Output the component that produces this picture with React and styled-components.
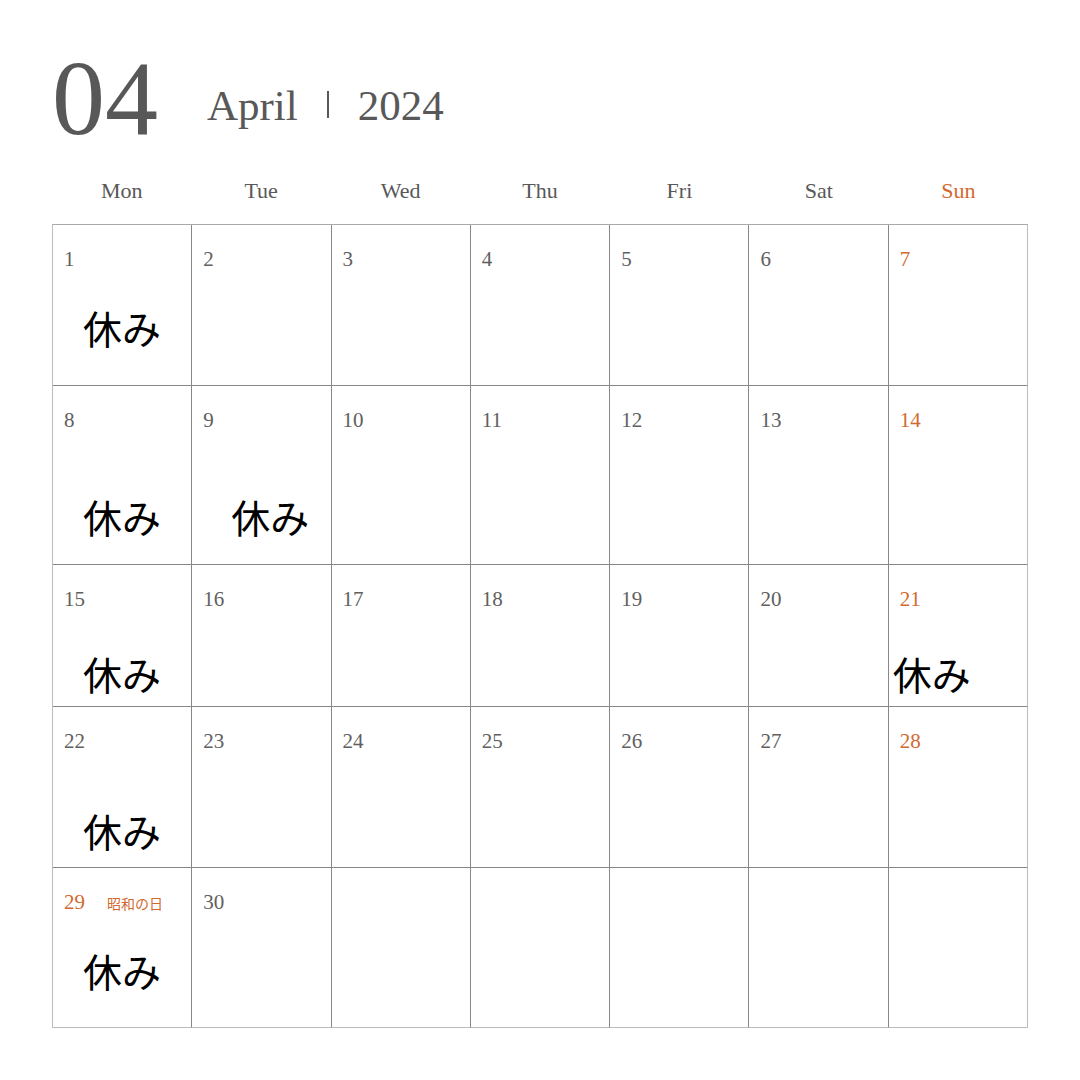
import styled, { createGlobalStyle } from 'styled-components';

const GlobalStyle = createGlobalStyle`
	html, body {
		margin: 0;
		padding: 0;
		background: #fff;
	}
`;

const SERIF = '"Liberation Serif", "DejaVu Serif", serif';
const SANS_JP = '"Noto Sans CJK JP", "Noto Sans", sans-serif';
const INK = '#585858';
const ACCENT = '#d2692f';

const Page = styled.div`
	width: 1080px;
	height: 1080px;
	box-sizing: border-box;
	padding: 42px 52px 0;
	font-family: ${SERIF};
	color: ${INK};
`;

const Title = styled.header`
	display: flex;
	align-items: flex-start;
	height: 108px;
`;

const MonthNum = styled.span`
	font-size: 106px;
	line-height: 1;
	margin-top: 4px;
`;

const Sub = styled.div`
	display: flex;
	align-items: center;
	margin: 43px 0 0 49px;
	height: 42px;
	font-size: 43px;
	line-height: 42px;
`;

const Divider = styled.span`
	display: inline-block;
	width: 2px;
	height: 27px;
	margin: -3px 29px 0 29px;
	background: ${INK};
`;

const WeekRow = styled.div`
	display: grid;
	grid-template-columns: repeat(7, 1fr);
	height: 74px;
	box-sizing: border-box;
	padding-top: 7px;
	align-items: center;
`;

const WeekDay = styled.div`
	text-align: center;
	font-size: 22px;
	color: ${(p) => (p.$sun ? ACCENT : INK)};
`;

const Grid = styled.div`
	display: grid;
	grid-template-columns: repeat(7, 1fr);
	grid-template-rows: 161px 179px 142px 161px 160px;
	border-top: 1px solid #aaa;
	border-left: 1px solid #bbb;
`;

const Cell = styled.div`
	display: flex;
	flex-direction: column;
	align-items: flex-start;
	padding: 23px 0 0 11px;
	border-right: 1px solid ${(p) => (p.$last ? '#bbb' : '#888')};
	border-bottom: 1px solid ${(p) => (p.$lastRow ? '#bbb' : '#888')};
	min-width: 0;
`;

const DayLine = styled.div`
	display: flex;
	align-items: baseline;
	height: 22px;
`;

const DayNum = styled.span`
	font-size: 21px;
	line-height: 22px;
	color: ${(p) => (p.$red ? ACCENT : '#606060')};
`;

const HolidayName = styled.span`
	margin-left: 22px;
	font-family: ${SANS_JP};
	font-size: 14px;
	line-height: 22px;
	color: ${ACCENT};
`;

const Note = styled.div`
	margin-top: ${(p) => p.$top}px;
	margin-left: ${(p) => p.$indent}px;
	font-family: ${SANS_JP};
	font-size: 39px;
	line-height: 40px;
	color: #000;
	white-space: nowrap;
`;

const WEEK = ['Mon', 'Tue', 'Wed', 'Thu', 'Fri', 'Sat', 'Sun'];

// note offset from the day number, per row
const ROW_NOTE_TOP = [37, 65, 43, 58, 37];

const OFF = { 1: 19, 8: 19, 9: 28, 15: 19, 21: -7, 22: 19, 29: 19 };
const HOLIDAYS = { 29: '昭和の日' };

const weeks = [];
for (let w = 0; w < 5; w++) {
	const row = [];
	for (let d = 0; d < 7; d++) {
		const n = w * 7 + d + 1;
		row.push(n <= 30 ? n : null);
	}
	weeks.push(row);
}

const Calendar = () => (
	<Page>
		<GlobalStyle />
		<Title>
			<MonthNum>04</MonthNum>
			<Sub>
				<span>April</span>
				<Divider />
				<span>2024</span>
			</Sub>
		</Title>
		<WeekRow>
			{WEEK.map((d) => (
				<WeekDay key={d} $sun={d === 'Sun'}>
					{d}
				</WeekDay>
			))}
		</WeekRow>
		<Grid>
			{weeks.map((row, wi) =>
				row.map((n, di) => (
					<Cell key={`${wi}-${di}`} $last={di === 6} $lastRow={wi === 4}>
						{n && (
							<DayLine>
								<DayNum $red={di === 6 || HOLIDAYS[n]}>{n}</DayNum>
								{HOLIDAYS[n] && <HolidayName>{HOLIDAYS[n]}</HolidayName>}
							</DayLine>
						)}
						{n && OFF[n] !== undefined && (
							<Note $top={ROW_NOTE_TOP[wi]} $indent={OFF[n]}>
								休み
							</Note>
						)}
					</Cell>
				))
			)}
		</Grid>
	</Page>
);

export default Calendar;
